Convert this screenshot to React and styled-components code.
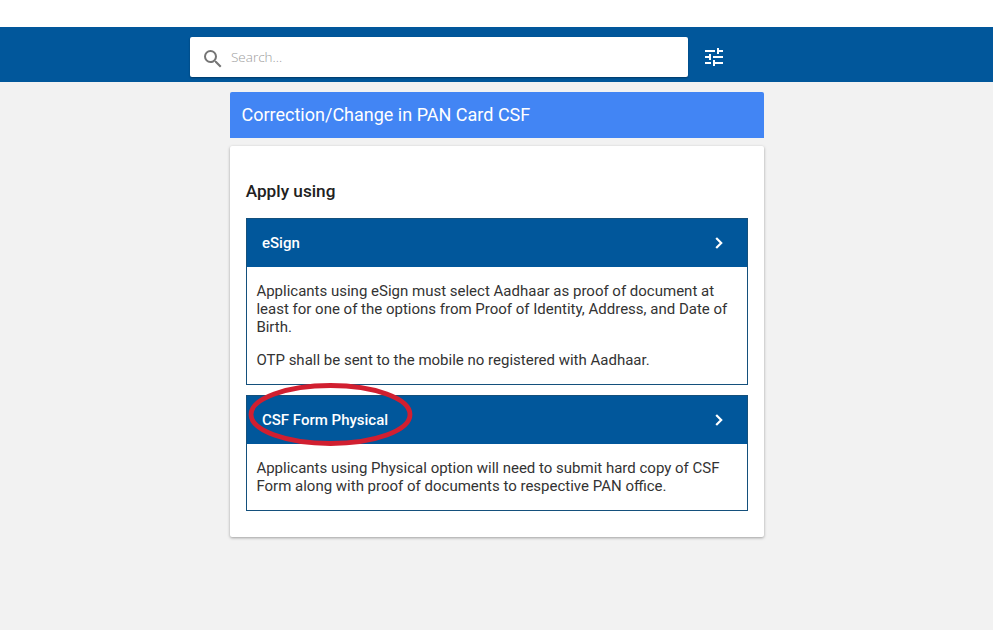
import React from "react";
import styled, { createGlobalStyle } from "styled-components";

const Global = createGlobalStyle`
  html, body { margin: 0; padding: 0; background: #f2f2f2; }
  body { font-family: Roboto, "Liberation Sans", sans-serif; color: #212121; }
  * { box-sizing: border-box; }
`;
const Page = styled.div`
  width: 993px; height: 630px; overflow: hidden; padding-top: 27px; background: linear-gradient(#fff 27px, #f2f2f2 27px);
`;
const Header = styled.header`
  height: 55px; background: #01579b; display: flex; align-items: center; padding: 5px 0 0 190px;
`;
const SearchBox = styled.div`
  width: 498px; height: 40px; background: #fff; border-radius: 2px; display: flex; align-items: center;
  padding-left: 11px; gap: 6px; box-shadow: 0 1px 2px rgba(0,0,0,.35);
  & svg { margin-top: 3px; }
`;
const Placeholder = styled.span`
  font-family: "Open Sans", sans-serif; font-weight: 300; font-size: 13.5px; color: #9c9c9c;
`;
const FilterButton = styled.button`
  margin-left: 14px; width: 24px; height: 24px; padding: 0; border: 0; background: none; display: flex; color: #fff;
`;
const Column = styled.main`
  width: 534px; margin: 10px 0 0 230px; display: flex; flex-direction: column; gap: 8px;
`;
const TitleBar = styled.h1`
  margin: 0; height: 46px; background: #4285f4; color: #fff; border-radius: 2px 2px 0 0;
  font-size: 18px; font-weight: 400; line-height: 46px; padding-left: 11.5px;
`;
const Card = styled.section`
  height: 391px; background: #fff; border-radius: 2px; padding: 33px 16px 0 15.7px;
  box-shadow: 0 1px 3px rgba(0,0,0,.35); display: flex; flex-direction: column;
`;
const CardTitle = styled.h2`
  margin: 0 0 15px; font-size: 17.2px; font-weight: 500; line-height: 24px; color: #212121;
`;
const Option = styled.article`
  border: 1px solid #14507c; margin-bottom: 10px; position: relative;
`;
const OptionHead = styled.div`
  height: 48px; background: #01579b; color: #fff; display: flex; align-items: center; justify-content: space-between;
  padding: 0 21px 0 15.3px; font-size: 15px; font-weight: 500;
`;
const OptionBody = styled.div`
  padding: 15px 10px 15px 9.7px; font-size: 15px; line-height: 18px; color: #333;
  & p { margin: 0 0 15px; }
  & p:last-child { margin-bottom: 0; }
`;
const Ring = styled.svg`
  position: absolute; left: 1px; top: -14px; pointer-events: none;
`;

const Search = () => (
  <svg width="24" height="24" viewBox="0 0 24 24" fill="#757575"><path d="M15.5 14h-.79l-.28-.27A6.47 6.47 0 0 0 16 9.5 6.5 6.5 0 1 0 9.5 16c1.61 0 3.09-.59 4.23-1.57l.27.28v.79l5 4.99L20.49 19l-4.99-5zm-6 0C7.01 14 5 11.99 5 9.5S7.01 5 9.5 5 14 7.01 14 9.5 11.99 14 9.5 14z"/></svg>
);
const Tune = () => (
  <svg width="24" height="24" viewBox="0 0 24 24" fill="currentColor"><path d="M3 17v2h6v-2H3zM3 5v2h10V5H3zm10 16v-2h8v-2h-8v-2h-2v6h2zM7 9v2H3v2h4v2h2V9H7zm14 4v-2H11v2h10zm-6-4h2V7h4V5h-4V3h-2v6z"/></svg>
);
const Chevron = () => (
  <svg width="24" height="24" viewBox="0 0 24 24" fill="none" style={{ marginRight: -5 }}><path d="M9.2 7l5 5-5 5" stroke="#fff" strokeWidth="2.2"/></svg>
);

export default function App() {
  return (
    <Page>
      <Global />
      <Header>
        <SearchBox><Search /><Placeholder>Search...</Placeholder></SearchBox>
        <FilterButton aria-label="Filter"><Tune /></FilterButton>
      </Header>
      <Column>
        <TitleBar>Correction/Change in PAN Card CSF</TitleBar>
        <Card>
          <CardTitle>Apply using</CardTitle>
          <Option>
            <OptionHead>eSign<Chevron /></OptionHead>
            <OptionBody>
              <p>Applicants using eSign must select Aadhaar as proof of document at least for one of the options from Proof of Identity, Address, and Date of Birth.</p>
              <p>OTP shall be sent to the mobile no registered with Aadhaar.</p>
            </OptionBody>
          </Option>
          <Option>
            <OptionHead>CSF Form Physical<Chevron /></OptionHead>
            <OptionBody>
              <p>Applicants using Physical option will need to submit hard copy of CSF Form along with proof of documents to respective PAN office.</p>
            </OptionBody>
            <Ring width="170" height="66" viewBox="0 0 170 66">
              <ellipse cx="82.5" cy="32.5" rx="79.5" ry="29" fill="none" stroke="#d11f30" strokeWidth="4.8" />
            </Ring>
          </Option>
        </Card>
      </Column>
    </Page>
  );
}
